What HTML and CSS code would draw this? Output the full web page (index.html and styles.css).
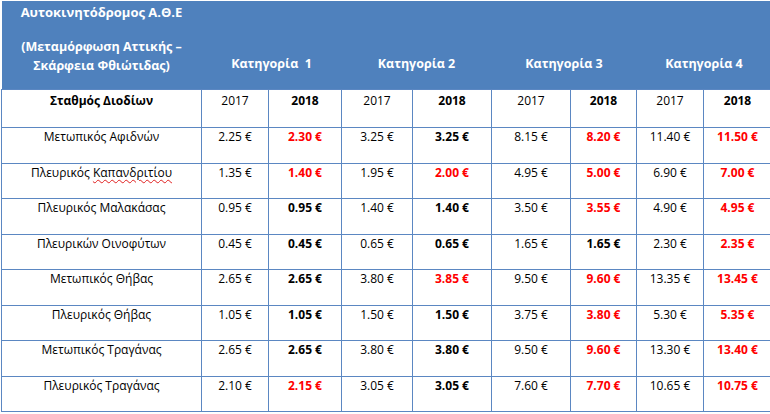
FILE: index.html
```html
<!DOCTYPE html>
<html lang="el">
<head>
<meta charset="utf-8">
<link rel="stylesheet" href="styles.css">
</head>
<body>
<table class="tolls">
  <colgroup>
    <col class="c-name"><col class="c-a"><col class="c-b"><col class="c-c"><col class="c-d"><col class="c-e"><col class="c-f"><col class="c-g"><col class="c-h">
  </colgroup>
  <thead>
    <tr class="head">
      <th class="h-title">
        <div class="title">Αυτοκινητόδρομος Α.Θ.Ε</div>
        <div class="sub">(Μεταμόρφωση Αττικής –<br>Σκάρφεια Φθιώτιδας)</div>
      </th>
      <th colspan="2" class="cat">Κατηγορία&nbsp; 1</th>
      <th colspan="2" class="cat">Κατηγορία 2</th>
      <th colspan="2" class="cat">Κατηγορία 3</th>
      <th colspan="2" class="cat">Κατηγορία 4</th>
    </tr>
  </thead>
  <tbody>
    <tr class="years">
      <td class="b">Σταθμός Διοδίων</td>
      <td>2017</td><td class="b">2018</td>
      <td>2017</td><td class="b">2018</td>
      <td>2017</td><td class="b">2018</td>
      <td>2017</td><td class="b">2018</td>
    </tr>
    <tr class="r1">
      <td>Μετωπικός Αφιδνών</td>
      <td>2.25 €</td><td class="up">2.30 €</td>
      <td>3.25 €</td><td class="b">3.25 €</td>
      <td>8.15 €</td><td class="up">8.20 €</td>
      <td>11.40 €</td><td class="up">11.50 €</td>
    </tr>
    <tr class="r2">
      <td>Πλευρικός <span class="spell">Καπανδριτίου</span></td>
      <td>1.35 €</td><td class="up">1.40 €</td>
      <td>1.95 €</td><td class="up">2.00 €</td>
      <td>4.95 €</td><td class="up">5.00 €</td>
      <td>6.90 €</td><td class="up">7.00 €</td>
    </tr>
    <tr class="r1">
      <td>Πλευρικός Μαλακάσας</td>
      <td>0.95 €</td><td class="b">0.95 €</td>
      <td>1.40 €</td><td class="b">1.40 €</td>
      <td>3.50 €</td><td class="up">3.55 €</td>
      <td>4.90 €</td><td class="up">4.95 €</td>
    </tr>
    <tr class="r2">
      <td>Πλευρικών Οινοφύτων</td>
      <td>0.45 €</td><td class="b">0.45 €</td>
      <td>0.65 €</td><td class="b">0.65 €</td>
      <td>1.65 €</td><td class="b">1.65 €</td>
      <td>2.30 €</td><td class="up">2.35 €</td>
    </tr>
    <tr class="r1">
      <td>Μετωπικός Θήβας</td>
      <td>2.65 €</td><td class="b">2.65 €</td>
      <td>3.80 €</td><td class="up">3.85 €</td>
      <td>9.50 €</td><td class="up">9.60 €</td>
      <td>13.35 €</td><td class="up">13.45 €</td>
    </tr>
    <tr class="r2">
      <td>Πλευρικός Θήβας</td>
      <td>1.05 €</td><td class="b">1.05 €</td>
      <td>1.50 €</td><td class="b">1.50 €</td>
      <td>3.75 €</td><td class="up">3.80 €</td>
      <td>5.30 €</td><td class="up">5.35 €</td>
    </tr>
    <tr class="r1">
      <td>Μετωπικός Τραγάνας</td>
      <td>2.65 €</td><td class="b">2.65 €</td>
      <td>3.80 €</td><td class="b">3.80 €</td>
      <td>9.50 €</td><td class="up">9.60 €</td>
      <td>13.30 €</td><td class="up">13.40 €</td>
    </tr>
    <tr class="r2">
      <td>Πλευρικός Τραγάνας</td>
      <td>2.10 €</td><td class="up">2.15 €</td>
      <td>3.05 €</td><td class="b">3.05 €</td>
      <td>7.60 €</td><td class="up">7.70 €</td>
      <td>10.65 €</td><td class="up">10.75 €</td>
    </tr>
  </tbody>
</table>
</body>
</html>
```
FILE: styles.css
```css
html, body {
  margin: 0;
  padding: 0;
  background: #ffffff;
}
body {
  padding: 1px 0 0 1px;
  font-family: "Open Sans", "DejaVu Sans", sans-serif;
  font-size: 12px;
  color: #000;
  overflow: hidden;
}
.tolls {
  border-collapse: collapse;
  table-layout: fixed;
  width: 770px;
}
.c-name { width: 200px; }
.c-a { width: 67px; }
.c-b { width: 73px; }
.c-c { width: 71px; }
.c-d { width: 79px; }
.c-e { width: 79px; }
.c-f { width: 66px; }
.c-g { width: 67px; }
.c-h { width: 68px; }

.head th {
  background: #4f81bd;
  color: #ffffff;
  font-weight: 700;
  font-size: 12.5px;
  height: 72px;
  padding: 0 0 16px;
  vertical-align: bottom;
  text-align: center;
  line-height: 19px;
  border: 0;
}
.head .h-title {
  vertical-align: top;
  padding: 2px 0 0;
}
.title {
  font-size: 13px;
  margin-bottom: 15px;
}
.tolls td {
  border: 1px solid #5b87c2;
  text-align: center;
  vertical-align: top;
  padding: 1px 0 0;
  line-height: 16px;
  white-space: nowrap;
}
.years td {
  height: 34px;
  padding-top: 3px;
}
.r1 td { height: 34px; }
.r2 td { height: 33px; }
.b { font-weight: 700; }
.up {
  font-weight: 700;
  color: #ff0000;
}
.spell {
  text-decoration: underline wavy #e02020;
  text-decoration-thickness: 1px;
  text-underline-offset: 2px;
}
```
